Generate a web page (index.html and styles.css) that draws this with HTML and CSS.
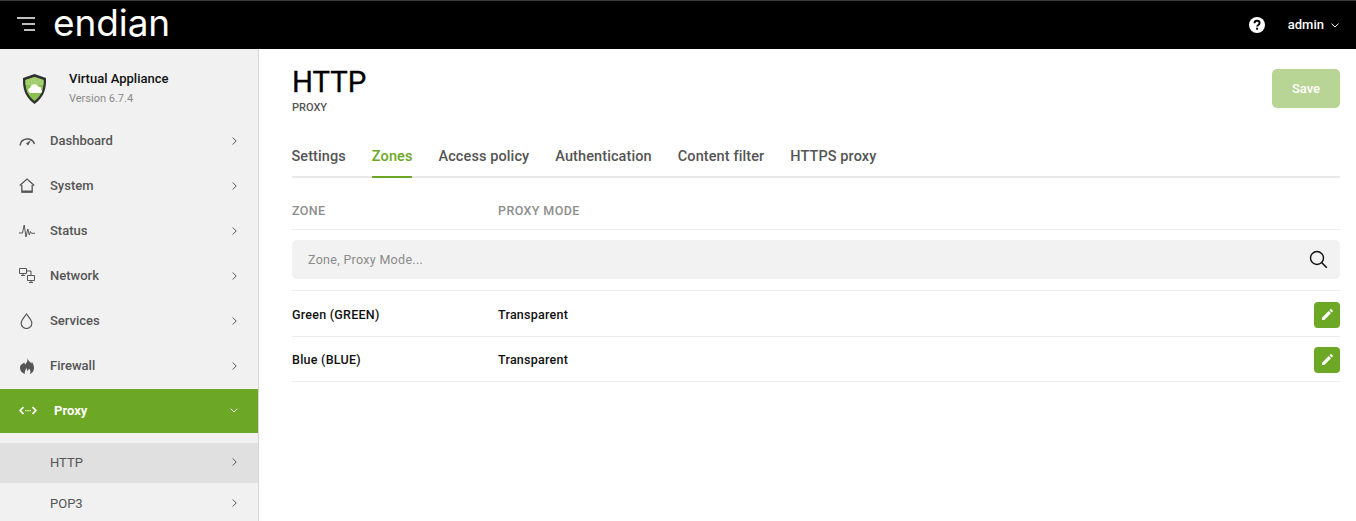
FILE: index.html
```html
<!DOCTYPE html>
<html lang="en">
<head>
<meta charset="utf-8">
<title>HTTP Proxy</title>
<link rel="stylesheet" href="styles.css">
</head>
<body>
<header class="topbar">
  <button class="burger" aria-label="Menu"><svg width="18" height="14" viewBox="0 0 18 14"><path d="M0 1h18M5 7h13M7 13h11" stroke="#fff" stroke-width="1.500" fill="none"/></svg></button>
  <span class="logo">endian</span>
  <span class="spacer"></span>
  <svg class="help" width="16" height="16" viewBox="0 0 16 16"><circle cx="8" cy="8" r="8" fill="#fff"/><path d="M5.500 6.200c0-1.500 1.100-2.400 2.600-2.400s2.500.9 2.500 2.200c0 1.900-2.500 1.900-2.500 3.600" stroke="#000" stroke-width="1.900" fill="none"/><rect x="7.100" y="10.700" width="2" height="2" fill="#000"/></svg>
  <span class="user">admin</span>
  <svg class="user-caret" width="8" height="5" viewBox="0 0 8 5"><path d="M.5.700 4 4 7.500.700" stroke="#fff" fill="none"/></svg>
</header>
<div class="shell">
  <aside class="sidebar">
    <div class="appliance">
      <svg width="23" height="30" viewBox="0 0 23 30"><path d="M11.500 0 23 4c.4 11-2 19-11.500 26C2 23-.4 15 0 4z" fill="#2e3331"/><path d="M11.500 3 20.500 6c.3 9-1.500 15-9 21C4 21 2.200 15 2.500 6z" fill="#8cc04f"/><path d="M2.500 6 11.500 3 20.500 6c.1 2 0 3.500-.1 5H2.600c-.1-1.500-.2-3-.1-5z" fill="#a3cf70"/><path d="M7.500 19a2.700 2.700 0 0 1 -.2-5.300 4.200 4.200 0 0 1 7.900-1.200 3 3 0 0 1 3 3.200 1.800 1.800 0 0 1 -.2 3.300z" fill="#fff"/></svg>
      <div class="appliance-text">
        <div class="appliance-name">Virtual Appliance</div>
        <div class="appliance-version">Version 6.7.4</div>
      </div>
    </div>
    <nav>
      <a class="nav-item"><span class="nav-icon"><svg width="16" height="10" viewBox="0 0 16 10"><path d="M1 9.500A7.500 7.500 0 0 1 15.500 8" stroke="#555" stroke-width="1.500" fill="none"/><path d="M7 7.500 12 4l-2.800 5.500z" fill="#555"/></svg></span><span class="nav-label">Dashboard</span><svg class="chev" width="5" height="8" viewBox="0 0 5 8"><path d="M.7.500 4.200 4 .7 7.500" stroke="#555" fill="none"/></svg></a>
      <a class="nav-item"><span class="nav-icon"><svg width="16" height="15" viewBox="0 0 16 15"><path d="M.7 7.500 8 1l7.300 6.500M2.800 7v7h10.400V7" stroke="#555" stroke-width="1.300" fill="none"/><path d="M2.800 12.500h10.400v2H2.800z" fill="#555"/></svg></span><span class="nav-label">System</span><svg class="chev" width="5" height="8" viewBox="0 0 5 8"><path d="M.7.500 4.200 4 .7 7.500" stroke="#555" fill="none"/></svg></a>
      <a class="nav-item"><span class="nav-icon"><svg width="16" height="14" viewBox="0 0 16 14"><path d="M0 9h3.500L5.200 1l1.800 12 1.800-8 1.500 6 1.200-3.500 1 1.800H16" stroke="#555" fill="none"/></svg></span><span class="nav-label">Status</span><svg class="chev" width="5" height="8" viewBox="0 0 5 8"><path d="M.7.500 4.200 4 .7 7.500" stroke="#555" fill="none"/></svg></a>
      <a class="nav-item"><span class="nav-icon"><svg width="16" height="15" viewBox="0 0 16 15"><path d="M.5.500h7v5h-7zM4 5.500v2M2 7.500h4M8.500 7.500h7v5h-7zM12 12.500v2M10 14.500h4M7.500 3h4.500v4.500" stroke="#555" fill="none"/></svg></span><span class="nav-label">Network</span><svg class="chev" width="5" height="8" viewBox="0 0 5 8"><path d="M.7.500 4.200 4 .7 7.500" stroke="#555" fill="none"/></svg></a>
      <a class="nav-item"><span class="nav-icon nav-icon-drop"><svg width="13" height="16" viewBox="0 0 12 15"><path d="M6 1C4.500 3.500 1 6.500 1 9.500a5 5 0 0 0 10 0C11 6.500 7.500 3.500 6 1z" stroke="#555" stroke-width="1.100" fill="none"/></svg></span><span class="nav-label">Services</span><svg class="chev" width="5" height="8" viewBox="0 0 5 8"><path d="M.7.500 4.200 4 .7 7.500" stroke="#555" fill="none"/></svg></a>
      <a class="nav-item"><span class="nav-icon nav-icon-drop"><svg width="14" height="16" viewBox="0 0 14 16"><path d="M7.500 0c.5 3 3 4 4 5.500.3-.8.300-1.300.2-2C13 5.500 14 7.500 14 10c0 3-2 5.500-4.200 6 1-1.500 1-3.500-.8-5.500C8.700 11.500 8 12.500 7 13c0-1.500-.2-2.500-.8-3.300C6 11.500 4.500 13 4.800 16 2 15 0 13 0 10 0 6.500 3 5.500 4.500 4.500c0 1 .2 1.500.8 2C6.500 4.500 8 3 7.500 0z" fill="#555"/></svg></span><span class="nav-label">Firewall</span><svg class="chev" width="5" height="8" viewBox="0 0 5 8"><path d="M.7.500 4.200 4 .7 7.500" stroke="#555" fill="none"/></svg></a>
      <a class="nav-item nav-active"><span class="nav-icon"><svg width="18" height="9" viewBox="0 0 18 9"><path d="M4.500 1 1.200 4.500 4.500 8M13.500 1 16.800 4.500 13.500 8" stroke="#fff" stroke-width="1.800" fill="none"/><path d="M6.200 4h1.300v1.300H6.200zM8.400 4h1.300v1.300H8.400zM10.600 4h1.300v1.300h-1.300z" fill="#fff"/></svg></span><span class="nav-label">Proxy</span><svg class="chev" width="8" height="5" viewBox="0 0 8 5"><path d="M.7.700 4 4 7.300.7" stroke="#fff" fill="none"/></svg></a>
      <div class="subnav">
        <a class="sub-item sub-active"><span class="nav-label">HTTP</span><svg class="chev" width="5" height="8" viewBox="0 0 5 8"><path d="M.7.500 4.200 4 .7 7.500" stroke="#555" fill="none"/></svg></a>
        <a class="sub-item"><span class="nav-label">POP3</span><svg class="chev" width="5" height="8" viewBox="0 0 5 8"><path d="M.7.500 4.200 4 .7 7.500" stroke="#555" fill="none"/></svg></a>
      </div>
    </nav>
  </aside>
  <main class="content">
    <div class="page-head">
      <div>
        <h1 class="title">HTTP</h1>
        <div class="subtitle">PROXY</div>
      </div>
      <button class="save">Save</button>
    </div>
    <div class="tabs">
      <a class="tab">Settings</a>
      <a class="tab tab-active">Zones</a>
      <a class="tab">Access policy</a>
      <a class="tab">Authentication</a>
      <a class="tab">Content filter</a>
      <a class="tab">HTTPS proxy</a>
    </div>
    <div class="table-head">
      <div class="col-zone">ZONE</div>
      <div>PROXY MODE</div>
    </div>
    <div class="search">
      <span>Zone, Proxy Mode...</span>
      <svg width="19" height="19" viewBox="0 0 19 19"><circle cx="8" cy="8" r="6.500" stroke="#111" stroke-width="1.400" fill="none"/><path d="m12.800 12.800 5 5" stroke="#111" stroke-width="1.600" fill="none"/></svg>
    </div>
    <div class="row row-first">
      <div class="col-zone">Green (GREEN)</div>
      <div class="col-mode">Transparent</div>
      <button class="edit" aria-label="Edit"><svg width="11" height="11" viewBox="0 0 12 12"><path d="M0 12V9.500L7.300 2.200l2.500 2.500L2.500 12zM8.100 1.400 9.200.3c.3-.3.800-.3 1.100 0l1.400 1.400c.3.3.3.8 0 1.100l-1.100 1.100z" fill="#fff"/></svg></button>
    </div>
    <div class="row">
      <div class="col-zone">Blue (BLUE)</div>
      <div class="col-mode">Transparent</div>
      <button class="edit" aria-label="Edit"><svg width="11" height="11" viewBox="0 0 12 12"><path d="M0 12V9.500L7.300 2.200l2.500 2.500L2.500 12zM8.100 1.400 9.200.3c.3-.3.800-.3 1.100 0l1.400 1.400c.3.3.3.8 0 1.100l-1.100 1.100z" fill="#fff"/></svg></button>
    </div>
  </main>
</div>
</body>
</html>
```
FILE: styles.css
```css
* { box-sizing: border-box; }
html, body { margin: 0; height: 100%; overflow: hidden; }
body { font-family: Roboto, "Liberation Sans", sans-serif; color: #000; background: #fff; }
button { font-family: inherit; border: 0; padding: 0; }

.topbar { height: 49px; background: #000; border-top: 1px solid #3a3a3a; display: flex; align-items: center; padding: 0 17px 0 17px; }
.burger { background: none; width: 18px; height: 14px; display: flex; margin-right: 18px; margin-bottom: 2px; }
.logo { font-family: Inter, sans-serif; font-weight: 400; font-size: 37px; letter-spacing: -.1px; color: #fff; line-height: 48px; margin-bottom: 5px; }
.spacer { flex: 1; }
.help { margin-right: 23px; }
.user { font-size: 13px; font-weight: 500; color: #fff; margin-right: 7px; padding-bottom: 2px; }

.shell { display: flex; height: 472px; }
.sidebar { width: 259px; flex: none; background: #f1f1f1; border-right: 1px solid #d6d6d6; overflow: hidden; }
.appliance { height: 70px; display: flex; align-items: center; padding: 10px 0 0 23px; }
.appliance-text { margin-left: 23px; }
.appliance-name { font-size: 13px; font-weight: 500; color: #111; line-height: 18px; }
.appliance-version { font-size: 11px; color: #8a8a8a; line-height: 18px; margin-top: 2px; }

.nav-item { height: 45px; display: flex; align-items: center; padding: 0 21px 2px 19px; color: #555; font-size: 13px; font-weight: 500; }
.nav-icon { width: 31px; display: flex; align-items: center; }
.nav-icon-drop { padding-left: 1px; }
.nav-label { flex: 1; }
.nav-active { height: 44px; background: #6da726; color: #fff; font-weight: 700; }
.nav-active .nav-icon { width: 35px; }
.nav-active .chev { margin-right: -1px; }
.subnav { padding-top: 10px; }
.sub-item { height: 40px; display: flex; align-items: center; padding: 0 21px 0 50px; color: #555; font-size: 13px; }
.sub-active { background: #e0e0e0; padding-bottom: 2px; }

.content { flex: 1; padding: 19px 16px 0 33px; min-width: 0; }
.page-head { display: flex; justify-content: space-between; align-items: flex-start; height: 69px; }
.title { margin: 0; font-size: 29.400px; font-weight: 400; line-height: 29px; -webkit-text-stroke: .3px #000; }
.subtitle { font-size: 11px; font-weight: 500; color: #555; line-height: 12px; margin-top: 5px; }
.save { width: 68px; height: 39px; margin-top: 1px; background: #b9d596; color: #fff; font-size: 13px; font-weight: 500; border-radius: 5px; }

.tabs { display: flex; gap: 26px; height: 41px; border-bottom: 2px solid #e8e8e8; }
.tab { font-size: 14.500px; font-weight: 500; color: #555; line-height: 39px; height: 41px; letter-spacing: .1px; }
.tab:first-child { margin-left: -.6px; }
.tab-active { color: #6da726; border-bottom: 2px solid #6da726; }

.table-head { display: flex; height: 52px; align-items: center; border-bottom: 1px solid #ececec; font-size: 12.500px; font-weight: 500; color: #8e8e8e; letter-spacing: .4px; padding-top: 13px; }
.col-zone { width: 206px; flex: none; }

.search { height: 39px; margin-top: 10px; background: #f2f2f2; border-radius: 5px; display: flex; align-items: center; justify-content: space-between; padding: 0 12px 0 16px; font-size: 12.500px; color: #8a8a8a; letter-spacing: .3px; }

.row { height: 45px; display: flex; align-items: center; border-bottom: 1px solid #ececec; font-size: 12.500px; font-weight: 500; color: #111; letter-spacing: .25px; padding-top: 1px; }
.row-first { border-top: 1px solid #ececec; margin-top: 11px; height: 47px; padding-top: 2px; }
.col-mode { flex: 1; }
.edit { width: 26px; height: 26px; background: #6da726; border-radius: 4px; display: flex; align-items: center; justify-content: center; }
```
